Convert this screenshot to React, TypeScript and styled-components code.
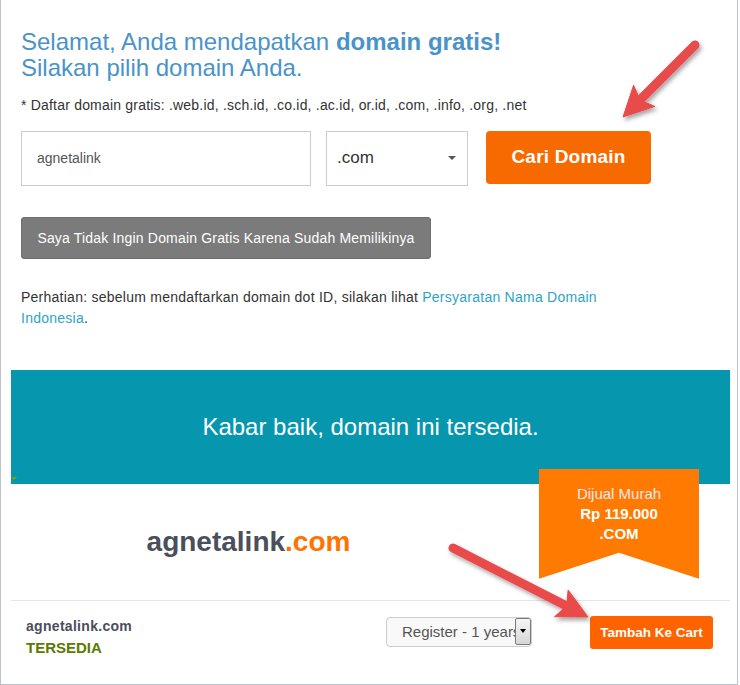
import React from "react";
import styled, { createGlobalStyle } from "styled-components";

const GlobalStyle = createGlobalStyle`
  html, body { margin: 0; padding: 0; background: #fff; overflow: hidden; }
  body { font-family: "Liberation Sans", Arial, sans-serif; }
  * { box-sizing: border-box; }
`;

const FONT = `"Liberation Sans", Arial, sans-serif`;

const Frame = styled.div`
  position: relative;
  width: 738px;
  height: 685px;
  border: 1px solid #bcc0c8;
  border-top: none;
  background: #fff;
`;

const Top = styled.section`
  padding: 29px 20px 0 20px;
`;

const Title = styled.h1`
  margin: 0;
  font-size: 24px;
  line-height: 26.4px;
  font-weight: normal;
  color: #4a93c9;
  b {
    font-weight: bold;
  }
`;

const FreeList = styled.p`
  margin: 13px 0 0;
  font-size: 14px;
  line-height: 20px;
  letter-spacing: 0.2px;
  color: #333;
`;

const SearchRow = styled.div`
  display: flex;
  align-items: flex-start;
  margin-top: 16px;
`;

const NameInput = styled.input`
  width: 290px;
  height: 55px;
  margin: 0;
  border: 1px solid #ccc;
  border-radius: 0;
  padding: 0 15px;
  font-family: ${FONT};
  font-size: 14px;
  color: #555;
  outline: none;
  background: #fff;
`;

const TldSelect = styled.div`
  margin-left: 15px;
  width: 142px;
  height: 55px;
  border: 1px solid #ccc;
  padding: 0 11px 0 10px;
  display: flex;
  align-items: center;
  justify-content: space-between;
  font-size: 17px;
  color: #333;
`;

const Caret = styled.span`
  width: 0;
  height: 0;
  border-left: 4px solid transparent;
  border-right: 4px solid transparent;
  border-top: 4px solid #555;
`;

const SearchButton = styled.button`
  margin-left: 18px;
  width: 165px;
  height: 53px;
  border: none;
  border-radius: 4px;
  background: #f76a00;
  color: #fff;
  font-family: ${FONT};
  font-weight: bold;
  font-size: 19px;
  letter-spacing: 0.2px;
  padding: 0;
`;

const GreyButton = styled.button`
  display: block;
  margin-top: 31px;
  width: 410px;
  height: 42px;
  padding: 0;
  background: #7b7b7b;
  border: 1px solid #6e6e6e;
  border-radius: 3px;
  color: #fff;
  font-family: ${FONT};
  font-size: 14px;
  letter-spacing: 0.18px;
`;

const Notice = styled.p`
  margin: 28px 0 0;
  width: 600px;
  font-size: 14px;
  line-height: 21px;
  letter-spacing: 0.25px;
  color: #333;
  a {
    color: #2fa3c6;
    text-decoration: none;
  }
`;

const Banner = styled.div`
  position: relative;
  margin: 41px 7px 0 10px;
  height: 114px;
  background: #0696ae;
  color: #fff;
  font-size: 24px;
  display: flex;
  align-items: center;
  justify-content: center;
  &::after {
    content: "";
    position: absolute;
    left: 0;
    bottom: 4px;
    border-left: 3px solid transparent;
    border-right: 3px solid transparent;
    border-top: 3px solid #8c9c00;
  }
`;

const ResultArea = styled.div`
  position: relative;
  height: 116px;
  margin: 0 7px 0 10px;
  display: flex;
`;

const DomainName = styled.div`
  width: 475px;
  display: flex;
  align-items: center;
  justify-content: center;
  font-size: 28px;
  font-weight: bold;
  color: #4a4f5b;
  span {
    color: #ff7300;
  }
`;

const Ribbon = styled.div`
  position: absolute;
  top: -15px;
  left: 528px;
  width: 160px;
  height: 110px;
  padding-top: 15px;
  background: #fe7a00;
  clip-path: polygon(0 0, 100% 0, 100% 100%, 50% 76.4%, 0 100%);
  text-align: center;
  color: #fff;
  font-size: 15px;
  line-height: 20px;
`;

const RibbonLine = styled.div<{ $strong?: boolean; $tint?: string }>`
  font-weight: ${(p) => (p.$strong ? "bold" : "normal")};
  color: ${(p) => p.$tint || "#fff"};
`;

const Divider = styled.div`
  height: 1px;
  margin: 0 7px 0 10px;
  background: #e6e6e6;
`;

const BottomRow = styled.div`
  display: flex;
  align-items: flex-start;
  padding: 15px 0 0 25px;
`;

const Status = styled.div`
  width: 360px;
`;

const StatusName = styled.div`
  font-size: 14px;
  line-height: 20px;
  font-weight: bold;
  letter-spacing: 0.3px;
  color: #4a4e5a;
`;

const StatusLabel = styled.div`
  margin-top: 2px;
  font-size: 15px;
  line-height: 20px;
  font-weight: bold;
  color: #5a7a00;
`;

const PeriodSelect = styled.div`
  margin-top: 1px;
  width: 146px;
  height: 30px;
  border: 1px solid #ccc;
  border-radius: 4px;
  background: #f9f9f9;
  display: flex;
  padding: 0 0 0 15px;
  overflow: hidden;
`;

const PeriodText = styled.span`
  flex: 1;
  overflow: hidden;
  white-space: nowrap;
  font-size: 15px;
  line-height: 28px;
  color: #555;
`;

const PeriodArrow = styled.span`
  width: 16px;
  height: 27px;
  border: 1px solid #7a7a7a;
  border-radius: 2px;
  background: linear-gradient(#f6f6f6, #d6d6d6);
  display: flex;
  align-items: center;
  justify-content: center;
  &::before {
    content: "";
    border-left: 3px solid transparent;
    border-right: 3px solid transparent;
    border-top: 4px solid #000;
  }
`;

const CartButton = styled.button`
  margin-left: 58px;
  width: 123px;
  height: 33px;
  padding: 0;
  border: none;
  border-radius: 3px;
  background: #ff6300;
  color: #fff;
  font-family: ${FONT};
  font-size: 13.5px;
  font-weight: bold;
`;

const Annotations = styled.svg`
  position: absolute;
  top: 0;
  left: -1px;
  pointer-events: none;
  overflow: visible;
`;

type Pt = [number, number];

function Arrow({ tail, tip }: { tail: Pt; tip: Pt }) {
  const dx = tip[0] - tail[0];
  const dy = tip[1] - tail[1];
  const len = Math.hypot(dx, dy);
  const ux = dx / len;
  const uy = dy / len;
  const px = -uy;
  const py = ux;
  const bx = tip[0] - 30 * ux;
  const by = tip[1] - 30 * uy;
  const nx = bx + 6 * ux;
  const ny = by + 6 * uy;
  const c1 = [bx + 15 * px, by + 15 * py];
  const c2 = [bx - 15 * px, by - 15 * py];
  const head = `M${tip[0]} ${tip[1]} L${c1[0]} ${c1[1]} L${nx} ${ny} L${c2[0]} ${c2[1]} Z`;
  return (
    <g filter="url(#arrowShadow)">
      <line x1={tail[0]} y1={tail[1]} x2={nx} y2={ny} stroke="#e84b4a" strokeWidth={9} strokeLinecap="round" />
      <path d={head} fill="#e84b4a" stroke="#e84b4a" strokeWidth={1} strokeLinejoin="round" />
    </g>
  );
}

export default function App() {
  return (
    <>
      <GlobalStyle />
      <Frame>
        <Top>
          <Title>
            Selamat, Anda mendapatkan <b>domain gratis!</b>
            <br />
            Silakan pilih domain Anda.
          </Title>
          <FreeList>
            * Daftar domain gratis: .web.id, .sch.id, .co.id, .ac.id, or.id, .com, .info, .org, .net
          </FreeList>
          <SearchRow>
            <NameInput defaultValue="agnetalink" readOnly />
            <TldSelect>
              .com
              <Caret />
            </TldSelect>
            <SearchButton>Cari Domain</SearchButton>
          </SearchRow>
          <GreyButton>Saya Tidak Ingin Domain Gratis Karena Sudah Memilikinya</GreyButton>
          <Notice>
            Perhatian: sebelum mendaftarkan domain dot ID, silakan lihat{" "}
            <a href="#">Persyaratan Nama Domain Indonesia</a>.
          </Notice>
        </Top>
        <Banner>Kabar baik, domain ini tersedia.</Banner>
        <ResultArea>
          <DomainName>
            agnetalink<span>.com</span>
          </DomainName>
          <Ribbon>
            <RibbonLine $tint="#fde6ee">Dijual Murah</RibbonLine>
            <RibbonLine $strong>Rp 119.000</RibbonLine>
            <RibbonLine $strong>.COM</RibbonLine>
          </Ribbon>
        </ResultArea>
        <Divider />
        <BottomRow>
          <Status>
            <StatusName>agnetalink.com</StatusName>
            <StatusLabel>TERSEDIA</StatusLabel>
          </Status>
          <PeriodSelect>
            <PeriodText>Register - 1 years</PeriodText>
            <PeriodArrow />
          </PeriodSelect>
          <CartButton>Tambah Ke Cart</CartButton>
        </BottomRow>
        <Annotations width={740} height={685} viewBox="0 0 740 685">
          <defs>
            <filter id="arrowShadow" x="-20%" y="-20%" width="150%" height="150%">
              <feDropShadow dx="2" dy="3" stdDeviation="2" floodColor="#000" floodOpacity="0.35" />
            </filter>
          </defs>
          <Arrow tail={[695, 45]} tip={[623, 117]} />
          <Arrow tail={[453, 548]} tip={[588, 617]} />
        </Annotations>
      </Frame>
    </>
  );
}
